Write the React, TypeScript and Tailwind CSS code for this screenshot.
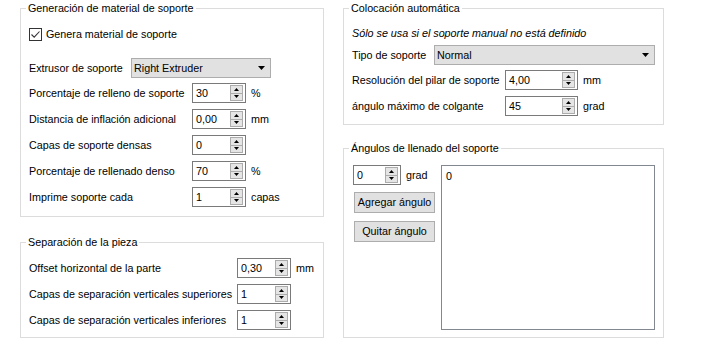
import React from "react";

function Up() {
  return (
    <svg width="5" height="3" viewBox="0 0 5 3" className="block">
      <path d="M0 3 L2.5 0 L5 3Z" fill="#000" />
    </svg>
  );
}
function Down() {
  return (
    <svg width="5" height="3" viewBox="0 0 5 3" className="block">
      <path d="M0 0 L2.5 3 L5 0Z" fill="#000" />
    </svg>
  );
}

function Spin({ value, w }: { value: string; w: string }) {
  return (
    <div className={`flex h-[20px] shrink-0 items-stretch border border-[#7a7a7a] bg-white ${w}`}>
      <div className="flex-1 pl-[3px] leading-[18px]">{value}</div>
      <div className="my-[1px] mr-[2px] flex w-[13px] flex-col">
        <div className="flex flex-1 items-center justify-center border border-[#acacac] bg-[#e5e5e5]">
          <Up />
        </div>
        <div className="flex flex-1 items-center justify-center border border-t-0 border-[#acacac] bg-[#e5e5e5]">
          <Down />
        </div>
      </div>
    </div>
  );
}

function Combo({ value, w }: { value: string; w: string }) {
  return (
    <div className={`flex h-[20px] shrink-0 items-center justify-between border border-[#adadad] bg-[#e1e1e1] pl-[2px] pr-[5px] ${w}`}>
      <span className="leading-[18px]">{value}</span>
      <svg width="7" height="4" viewBox="0 0 7 4" className="block">
        <path d="M0 0 L3.5 4 L7 0Z" fill="#000" />
      </svg>
    </div>
  );
}

function Group({ title, className, children }: { title: string; className: string; children: React.ReactNode }) {
  return (
    <fieldset className={`border border-[#dcdcdc] ${className}`}>
      <legend className="ml-[5px] px-[2px] leading-[16px] whitespace-nowrap">{title}</legend>
      {children}
    </fieldset>
  );
}

function Row({ label, lw, value, sw, unit }: { label: string; lw: string; value: string; sw: string; unit?: string }) {
  return (
    <div className="flex h-[26px] items-center whitespace-nowrap">
      <span className={`shrink-0 ${lw}`}>{label}</span>
      <Spin value={value} w={sw} />
      {unit && <span className="ml-[5px]">{unit}</span>}
    </div>
  );
}

export default function App() {
  return (
    <div className="h-[346px] w-[704px] bg-white font-['Segoe_UI','Liberation_Sans',sans-serif] text-[10.75px] leading-[16px] text-black">
      <div className="flex gap-[19px] pl-[20px]">
        <div className="flex w-[304px] flex-col">
          <Group title="Generación de material de soporte" className="">
            <div className="pb-[6px] pl-[8px]">
              <div className="mt-[8px] flex h-[20px] items-center gap-[4px] whitespace-nowrap">
                <div className="flex h-[13px] w-[13px] items-center justify-center border border-[#333333] bg-white">
                  <svg width="11" height="11" viewBox="0 0 11 11">
                    <path d="M1.5 5.5 L4.2 8.2 L9.5 2.5" stroke="#333" strokeWidth="1.1" fill="none" />
                  </svg>
                </div>
                <span>Genera material de soporte</span>
              </div>
              <div className="mt-[14px] flex h-[20px] items-center whitespace-nowrap">
                <span className="w-[102px] shrink-0">Extrusor de soporte</span>
                <Combo value="Right Extruder" w="w-[140px]" />
              </div>
              <div className="mt-[2px] flex flex-col">
                <Row label="Porcentaje de relleno de soporte" lw="w-[163px]" value="30" sw="w-[54px]" unit="%" />
                <Row label="Distancia de inflación adicional" lw="w-[163px]" value="0,00" sw="w-[54px]" unit="mm" />
                <Row label="Capas de soporte densas" lw="w-[163px]" value="0" sw="w-[54px]" />
                <Row label="Porcentaje de rellenado denso" lw="w-[163px]" value="70" sw="w-[54px]" unit="%" />
                <Row label="Imprime soporte cada" lw="w-[163px]" value="1" sw="w-[54px]" unit="capas" />
              </div>
            </div>
          </Group>
          <Group title="Separación de la pieza" className="mt-[17px]">
            <div className="pb-[4px] pl-[8px] pt-[5px]">
              <Row label="Offset horizontal de la parte" lw="w-[208px]" value="0,30" sw="w-[54px]" unit="mm" />
              <Row label="Capas de separación verticales superiores" lw="w-[208px]" value="1" sw="w-[54px]" />
              <Row label="Capas de separación verticales inferiores" lw="w-[208px]" value="1" sw="w-[54px]" />
            </div>
          </Group>
        </div>
        <div className="flex w-[321px] flex-col">
          <Group title="Colocación automática" className="">
            <div className="pb-[5px] pl-[8px] pr-[8px]">
              <div className="mt-[9px] italic whitespace-nowrap">Sólo se usa si el soporte manual no está definido</div>
              <div className="mt-[4px] flex h-[20px] items-center whitespace-nowrap">
                <span className="w-[82px] shrink-0">Tipo de soporte</span>
                <Combo value="Normal" w="w-[221px]" />
              </div>
              <div className="mt-[2px]">
                <Row label="Resolución del pilar de soporte" lw="w-[153px]" value="4,00" sw="w-[73px]" unit="mm" />
                <Row label="ángulo máximo de colgante" lw="w-[153px]" value="45" sw="w-[73px]" unit="grad" />
              </div>
            </div>
          </Group>
          <Group title="Ángulos de llenado del soporte" className="mt-[15px]">
            <div className="flex pb-[7px] pl-[9px] pr-[8px] pt-[9px]">
              <div className="flex w-[88px] flex-col">
                <div className="flex items-center">
                  <Spin value="0" w="w-[48px]" />
                  <span className="ml-[5px]">grad</span>
                </div>
                <button className="ml-[1px] mt-[7px] h-[21px] w-[81px] whitespace-nowrap border border-[#adadad] bg-[#e1e1e1] px-0 text-center leading-[19px]">
                  Agregar ángulo
                </button>
                <button className="ml-[1px] mt-[8px] h-[21px] w-[81px] whitespace-nowrap border border-[#adadad] bg-[#e1e1e1] px-0 text-center leading-[19px]">
                  Quitar ángulo
                </button>
              </div>
              <div className="h-[165px] w-[214px] border border-[#828790] bg-white pl-[4px] pt-[2px]">0</div>
            </div>
          </Group>
        </div>
      </div>
    </div>
  );
}
